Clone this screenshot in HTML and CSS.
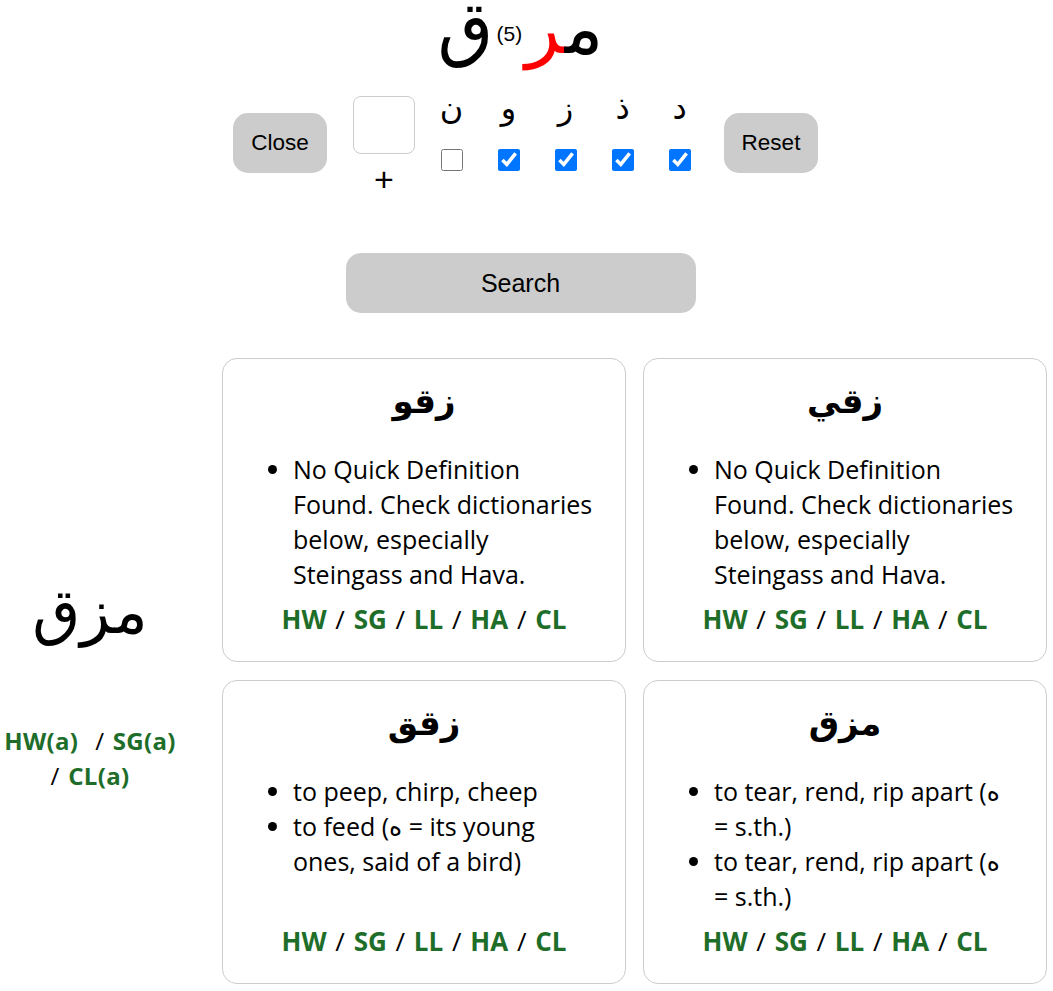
FILE: index.html
```html
<!DOCTYPE html>
<html lang="en">
<head>
<meta charset="utf-8">
<title>Root search</title>
<link rel="stylesheet" href="styles.css">
</head>
<body>
<header class="title" dir="rtl">م<span class="red">ر</span><span class="count">(5)</span>ق</header>

<div class="controls">
  <button class="btn small">Close</button>
  <div class="add">
    <div class="box"></div>
    <span class="plus">+</span>
  </div>
  <label class="letter"><span class="ar">ن</span><input type="checkbox"></label>
  <label class="letter"><span class="ar">و</span><input type="checkbox" checked></label>
  <label class="letter"><span class="ar">ز</span><input type="checkbox" checked></label>
  <label class="letter"><span class="ar">ذ</span><input type="checkbox" checked></label>
  <label class="letter"><span class="ar">د</span><input type="checkbox" checked></label>
  <button class="btn small">Reset</button>
</div>

<div class="search-row">
  <button class="btn search">Search</button>
</div>

<main class="results">
  <aside class="root">
    <div class="root-word">مزق</div>
    <div class="root-links"><a>HW(a)</a>&nbsp; / <a>SG(a)</a> / <a>CL(a)</a></div>
  </aside>

  <section class="card">
    <h2>زقو</h2>
    <ul>
      <li>No Quick Definition Found. Check dictionaries below, especially Steingass and Hava.</li>
    </ul>
    <p class="links"><a>HW</a> / <a>SG</a> / <a>LL</a> / <a>HA</a> / <a>CL</a></p>
  </section>

  <section class="card">
    <h2>زقي</h2>
    <ul>
      <li>No Quick Definition Found. Check dictionaries below, especially Steingass and Hava.</li>
    </ul>
    <p class="links"><a>HW</a> / <a>SG</a> / <a>LL</a> / <a>HA</a> / <a>CL</a></p>
  </section>

  <section class="card">
    <h2>زقق</h2>
    <ul>
      <li>to peep, chirp, cheep</li>
      <li>to feed (ه = its young ones, said of a bird)</li>
    </ul>
    <p class="links"><a>HW</a> / <a>SG</a> / <a>LL</a> / <a>HA</a> / <a>CL</a></p>
  </section>

  <section class="card">
    <h2>مزق</h2>
    <ul>
      <li>to tear, rend, rip apart (ه = s.th.)</li>
      <li>to tear, rend, rip apart (ه = s.th.)</li>
    </ul>
    <p class="links"><a>HW</a> / <a>SG</a> / <a>LL</a> / <a>HA</a> / <a>CL</a></p>
  </section>
</main>
</body>
</html>
```

FILE: styles.css
```css
body {
  margin: 0;
  font-family: "Open Sans", "DejaVu Sans", sans-serif;
  color: #000;
  background: #fff;
}

.title {
  text-align: center;
  font-family: "DejaVu Sans", sans-serif;
  font-size: 72px;
  line-height: 56px;
  height: 76px;
  margin-left: -12px;
}
.title .red { color: #ff0000; }
.title .count {
  font-family: "Liberation Sans", sans-serif;
  font-size: 21px;
  line-height: 0;
  vertical-align: 12px;
  margin: 0 3px;
}

.controls {
  display: flex;
  justify-content: center;
  align-items: flex-start;
  margin-top: 20px;
  margin-left: -2px;
}

.btn {
  border: none;
  background: #cccccc;
  color: #000;
  font-family: "Liberation Sans", Arial, sans-serif;
  border-radius: 15px;
  cursor: pointer;
}
.btn.small {
  width: 94px;
  height: 60px;
  font-size: 22.5px;
  margin-top: 17px;
}

.add {
  display: flex;
  flex-direction: column;
  align-items: center;
  margin: 0 8px 0 26px;
}
.box {
  width: 60px;
  height: 56px;
  border: 1px solid #cccccc;
  border-radius: 8px;
}
.plus {
  font-family: "Liberation Sans", sans-serif;
  font-size: 34px;
  line-height: 36px;
  margin-top: 7px;
}

.letter {
  display: flex;
  flex-direction: column;
  align-items: center;
  width: 57px;
  margin-top: -8px;
}
.letter .ar {
  font-family: "DejaVu Sans", sans-serif;
  font-size: 32px;
  line-height: 40px;
}
.letter input {
  width: 22px;
  height: 22px;
  margin: 21px 0 0 0;
}
.letter:last-of-type { margin-right: 16px; }

.search-row {
  display: flex;
  justify-content: center;
  margin-top: 56px;
  margin-right: 12px;
}
.btn.search {
  width: 350px;
  height: 60px;
  font-size: 25px;
}

.results {
  display: grid;
  grid-template-columns: 205px 404px 404px;
  column-gap: 17px;
  row-gap: 18px;
  margin-top: 45px;
}

.root {
  grid-row: 1 / span 2;
  align-self: start;
  text-align: center;
  padding-right: 25px;
  padding-top: 214px;
}
.root-word {
  font-family: "DejaVu Sans", sans-serif;
  font-size: 62px;
  line-height: 80px;
  margin-bottom: 71px;
}
.root-links {
  font-size: 24px;
  line-height: 35px;
  word-spacing: 2px;
  letter-spacing: 0.3px;
}

a {
  color: #1e6e2a;
  font-weight: 700;
  text-decoration: none;
}

.card {
  border: 1px solid #cccccc;
  border-radius: 15px;
  padding: 16px 29px 24px 29px;
  display: flex;
  flex-direction: column;
}
.card h2 {
  margin: 0;
  text-align: center;
  font-family: "DejaVu Sans", sans-serif;
  font-size: 34px;
  line-height: 52px;
}
.card ul {
  margin: 25px 0 0 0;
  padding-left: 41px;
  font-size: 25px;
  line-height: 35px;
}
.card .links {
  margin: auto 0 0 0;
  padding-top: 10px;
  text-align: center;
  font-size: 26px;
  line-height: 35px;
  word-spacing: 2px;
}
```
